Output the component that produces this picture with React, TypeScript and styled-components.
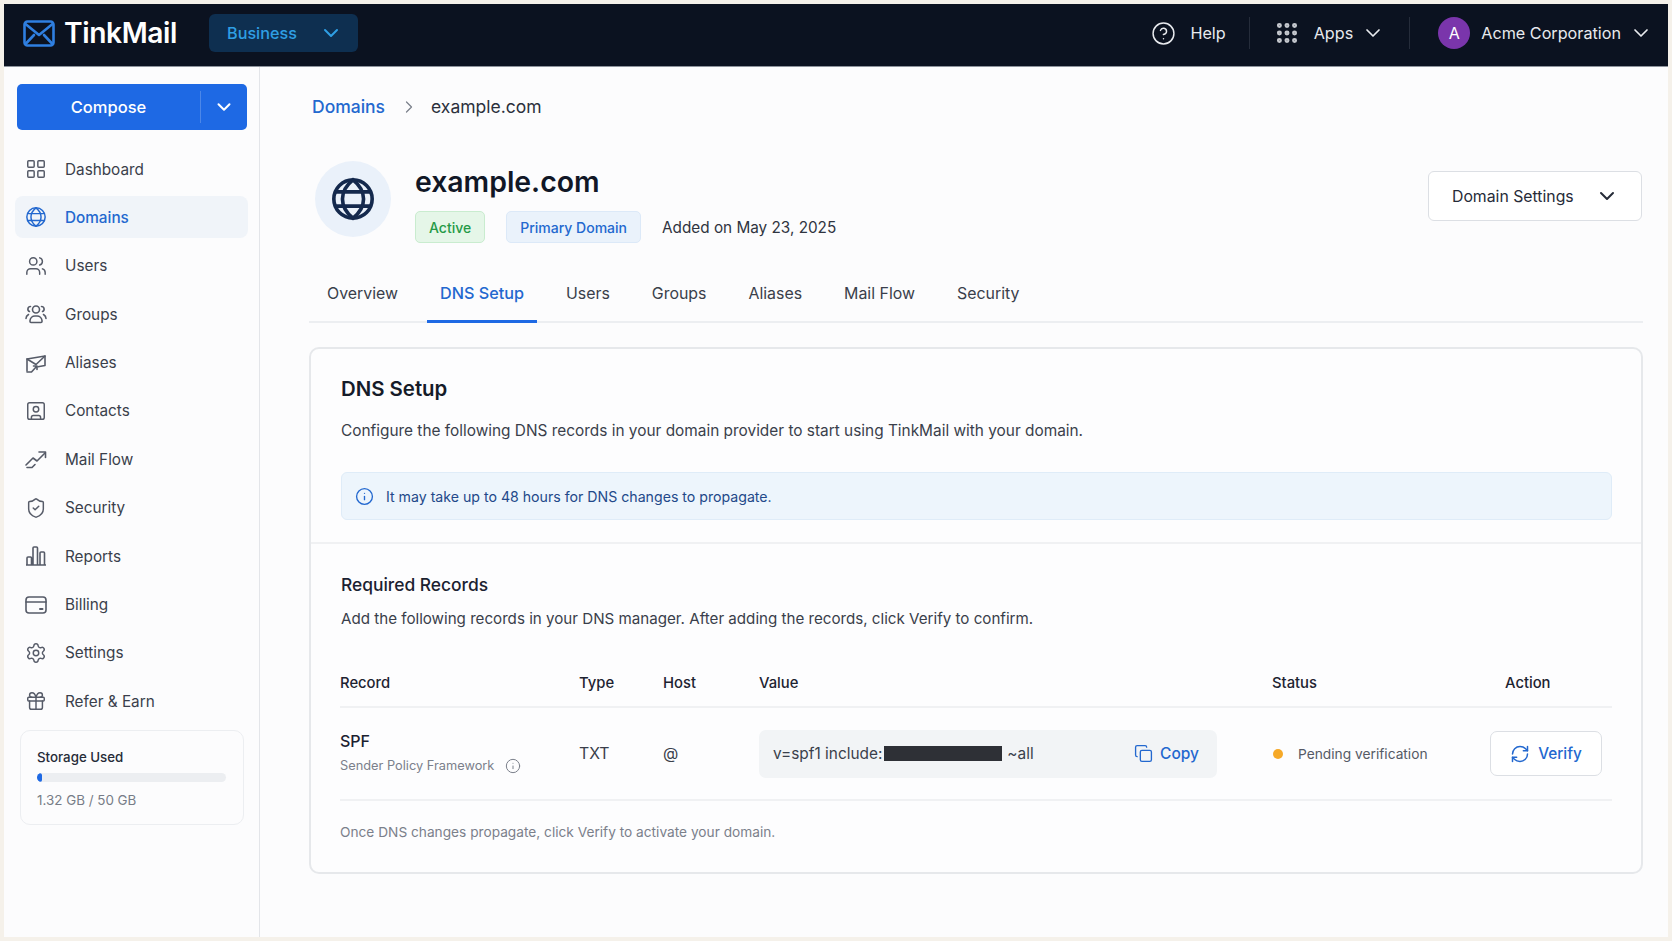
import React from "react";
import styled, { createGlobalStyle } from "styled-components";
import {
  ChevronDown,
  ChevronRight,
  CircleHelp,
  Copy,
  Gift,
  Grip,
  Info,
  LayoutGrid,
  RefreshCw,
  Settings,
  ShieldCheck,
  SquareUser,
  Users,
} from "lucide-react";

const GlobalStyle = createGlobalStyle`
  html, body { margin: 0; padding: 0; height: 100%; }
  body {
    background: #f5f1ea;
    font-family: Inter, "Noto Sans", "Liberation Sans", sans-serif;
    color: #1b2130;
    overflow: hidden;
  }
  * { box-sizing: border-box; }
`;

const Frame = styled.div`
  width: 1672px;
  height: 941px;
  padding: 4px;
  display: flex;
  flex-direction: column;
`;

const Header = styled.header`
  height: 63px;
  flex: none;
  display: flex;
  align-items: center;
  background: #0b1220;
  border-bottom: 1px solid #8d939c;
  padding: 0 15px 4px 19px;
`;

const Logo = styled.div`
  display: flex;
  align-items: center;
  gap: 9px;
  color: #fff;
  font-size: 28.2px;
  font-weight: 600;
  letter-spacing: -0.4px;
`;

const PlanButton = styled.div`
  margin-left: 32px;
  width: 149px;
  height: 38px;
  border-radius: 6px;
  background: #0e2f50;
  color: #2f9fe4;
  font-size: 16.2px;
  font-weight: 500;
  display: flex;
  align-items: center;
  justify-content: space-between;
  padding: 0 15px 0 18px;
`;

const HeaderRight = styled.div`
  margin-left: auto;
  display: flex;
  align-items: center;
  color: #e8eaee;
  font-size: 16.2px;
`;

const HeaderItem = styled.div`
  display: flex;
  align-items: center;
  gap: 14px;
`;

const HeaderCaret = styled(ChevronDown)`
  margin-left: -6px;
`;

const HeaderDivider = styled.div`
  width: 1px;
  height: 32px;
  margin: 0 23.5px;
  background: #252c3a;
`;

const Avatar = styled.div`
  width: 32px;
  height: 32px;
  margin: 0 -3px 0 5px;
  border-radius: 50%;
  background: #7a35ab;
  color: #fff;
  display: flex;
  align-items: center;
  justify-content: center;
  font-size: 16px;
`;

const Body = styled.div`
  flex: 1;
  display: flex;
  min-height: 0;
  background: #fcfcfd;
`;

const Sidebar = styled.aside`
  width: 256px;
  flex: none;
  border-right: 1px solid #e3e5e9;
  padding: 17px 11px 0 11px;
`;

const ComposeButton = styled.div`
  margin: 0 1px 0 2px;
  height: 46px;
  border-radius: 5px;
  background: #1e69e4;
  color: #fff;
  font-size: 16.5px;
  font-weight: 500;
  display: flex;
  align-items: center;
`;

const ComposeLabel = styled.div`
  flex: 1;
  text-align: center;
`;

const ComposeCaret = styled.div`
  width: 47px;
  height: 32px;
  border-left: 1px solid #4c87e8;
  display: flex;
  align-items: center;
  justify-content: center;
`;

const Nav = styled.nav`
  margin-top: 18px;
  display: flex;
  flex-direction: column;
`;

const NavItem = styled.div<{ $active?: boolean }>`
  height: 42px;
  margin-bottom: 6.4px;
  border-radius: 8px;
  display: flex;
  align-items: center;
  gap: 18px;
  padding-left: 10px;
  font-size: 15.3px;
  color: ${(p) => (p.$active ? "#2368cf" : "#3a3f4b")};
  background: ${(p) => (p.$active ? "#f0f4f9" : "transparent")};
  font-weight: ${(p) => (p.$active ? 500 : 400)};
  svg { flex: none; color: ${(p) => (p.$active ? "#2368cf" : "#565b68")}; }
`;

const StorageCard = styled.div`
  margin: 1px 4px 0 5px;
  height: 95px;
  border: 1px solid #eceef1;
  border-radius: 10px;
  padding: 17px 17px 0 16px;
`;

const StorageTitle = styled.div`
  font-size: 13.3px;
  font-weight: 500;
  color: #262b38;
  line-height: 18px;
`;

const StorageTrack = styled.div`
  height: 9px;
  margin-top: 7px;
  border-radius: 5px;
  background: #eceef1;
  overflow: hidden;
`;

const StorageFill = styled.div`
  height: 100%;
  background: #1e69e4;
  border-radius: 5px;
`;

const StorageText = styled.div`
  margin-top: 10px;
  font-size: 13.4px;
  color: #777c87;
`;

const Main = styled.main`
  flex: 1;
  min-width: 0;
  padding: 0 25px 0 49px;
`;

const Crumbs = styled.div`
  height: 88px;
  padding-bottom: 9px;
  display: flex;
  align-items: center;
  font-size: 17.5px;
  margin-left: 3px;
`;

const CrumbLink = styled.span`
  color: #2368cf;
  font-weight: 500;
`;

const CrumbCaret = styled(ChevronRight)`
  margin-left: 14px;
  color: #7b808b;
`;

const CrumbCurrent = styled.span`
  margin-left: 12px;
  color: #2b303c;
`;

const DomainHead = styled.div`
  display: flex;
  align-items: center;
  height: 76px;
  margin-top: 6px;
  margin-left: 6px;
`;

const GlobeBadge = styled.div`
  width: 76px;
  height: 76px;
  border-radius: 50%;
  background: #eaf1fa;
  display: flex;
  align-items: center;
  justify-content: center;
  color: #14294d;
  flex: none;
`;

const DomainInfo = styled.div`
  margin-left: 24px;
  margin-top: 9px;
  display: flex;
  flex-direction: column;
  gap: 11px;
`;

const DomainName = styled.h1`
  margin: 0;
  font-size: 28.4px;
  line-height: 36px;
  font-weight: 600;
  color: #111726;
`;

const BadgeRow = styled.div`
  display: flex;
  align-items: center;
  gap: 21px;
`;

const Badge = styled.span<{ $tone: "green" | "blue" }>`
  height: 32px;
  padding: 0 13px;
  border-radius: 5px;
  font-size: 14px;
  font-weight: 500;
  display: flex;
  align-items: center;
  color: ${(p) => (p.$tone === "green" ? "#259a47" : "#2368cf")};
  background: ${(p) => (p.$tone === "green" ? "#e5f6e8" : "#eaf2fb")};
  border: 1px solid ${(p) => (p.$tone === "green" ? "#c9eccf" : "#dce9f8")};
`;

const AddedOn = styled.span`
  font-size: 15.3px;
  color: #2f3440;
`;

const SettingsButton = styled.div`
  margin-left: auto;
  margin-right: 1px;
  margin-top: -6px;
  width: 214px;
  height: 50px;
  border: 1px solid #dcdfe4;
  border-radius: 6px;
  background: #fff;
  display: flex;
  align-items: center;
  justify-content: space-between;
  padding: 0 22px 0 23px;
  font-size: 15.8px;
  color: #262b38;
`;

const Tabs = styled.div`
  margin-top: 26px;
  height: 60px;
  padding-left: 5px;
  border-bottom: 2px solid #eceef1;
  display: flex;
`;

const Tab = styled.div<{ $active?: boolean }>`
  height: 60px;
  padding: 3px 13px 0;
  margin-right: 16px;
  display: flex;
  align-items: center;
  font-size: ${(p) => (p.$active ? "16.2px" : "15.9px")};
  color: ${(p) => (p.$active ? "#2368cf" : "#3a3f4b")};
  font-weight: ${(p) => (p.$active ? 500 : 400)};
  border-bottom: 3px solid ${(p) => (p.$active ? "#1e69e4" : "transparent")};
`;

const Card = styled.section`
  margin-top: 24px;
  height: 527px;
  border: 2px solid #e6e8eb;
  border-radius: 10px;
  background: #fdfdfe;
`;

const CardTop = styled.div`
  height: 195px;
  padding: 26px 29px 0 30px;
  border-bottom: 2px solid #f0f1f3;
`;

const CardTitle = styled.h2`
  margin: 0;
  font-size: 20.4px;
  line-height: 28px;
  font-weight: 600;
  color: #151b29;
`;

const CardText = styled.p`
  margin: 16px 0 0;
  font-size: 15.4px;
  line-height: 24px;
  color: #3a3f4b;
`;

const Notice = styled.div`
  margin-top: 29px;
  height: 48px;
  border: 1px solid #dfecf8;
  border-radius: 6px;
  background: #edf5fc;
  display: flex;
  align-items: center;
  gap: 12px;
  padding: 0 13px;
  color: #23498a;
  font-size: 14.15px;
  svg { color: #2368cf; flex: none; }
`;

const CardBottom = styled.div`
  padding: 28px 29px 0 29px;
`;

const SubTitle = styled.h3`
  margin: 0 0 0 1px;
  font-size: 17.4px;
  line-height: 26px;
  font-weight: 500;
  color: #1b2130;
`;

const SubText = styled.p`
  margin: 9px 0 0 1px;
  font-size: 15.15px;
  line-height: 24px;
  color: #3a3f4b;
`;

const RecordGrid = styled.div`
  display: grid;
  grid-template-columns: 239px 84px 96px 513px 233px 1fr;
  align-items: center;
`;

const HeadRow = styled(RecordGrid)`
  margin-top: 33px;
  height: 44px;
  border-bottom: 2px solid #f0f1f3;
  font-size: 14.8px;
  font-weight: 500;
  color: #1d2331;
  padding-bottom: 4px;
`;

const RecordRow = styled(RecordGrid)`
  height: 93px;
  border-bottom: 2px solid #f0f1f3;
  font-size: 15.8px;
  color: #3a3f4b;
`;

const RecordName = styled.div`
  font-size: 16px;
  line-height: 22px;
  font-weight: 500;
  color: #1b2130;
`;

const RecordHint = styled.div`
  margin: 4px 0 2px;
  display: flex;
  align-items: center;
  gap: 11px;
  font-size: 12.8px;
  line-height: 20px;
  color: #7b808b;
`;

const ValueBox = styled.div`
  width: 458px;
  height: 48px;
  border-radius: 7px;
  background: #f2f4f6;
  display: flex;
  align-items: center;
  padding: 0 18px 0 14px;
  font-size: 15.4px;
  color: #3a3f4b;
`;

const Masked = styled.span`
  width: 118px;
  height: 15px;
  margin: 0 5px 0 2px;
  background: #2e3036;
`;

const CopyLink = styled.span`
  margin-left: auto;
  display: flex;
  align-items: center;
  gap: 7px;
  color: #2368cf;
  font-size: 15.5px;
  font-weight: 500;
`;

const StatusCell = styled.div`
  display: flex;
  align-items: center;
  gap: 15px;
  font-size: 13.75px;
  color: #555a65;
`;

const StatusDot = styled.span`
  width: 10px;
  height: 10px;
  margin-left: 1px;
  border-radius: 50%;
  background: #f6a928;
  flex: none;
`;

const VerifyButton = styled.div`
  margin-left: -15px;
  width: 112px;
  height: 45px;
  border: 1px solid #dcdfe4;
  border-radius: 7px;
  background: #fff;
  display: flex;
  align-items: center;
  justify-content: center;
  gap: 8px;
  color: #2368cf;
  font-size: 15.3px;
  font-weight: 500;
`;

const Footnote = styled.p`
  margin: 21px 0 0;
  font-size: 13.7px;
  line-height: 20px;
  color: #7b808b;
`;

const MailLogo = () => (
  <svg width="32" height="27" viewBox="0 0 32 27" fill="none" stroke="#2f7fe0" strokeWidth="2.6" strokeLinejoin="round" strokeLinecap="round">
    <rect x="1.5" y="1.5" width="29" height="24" rx="3" />
    <path d="M2.500 4l13.500 11L29.500 4M2.500 24l8.500-9M29.500 24l-8.500-9" />
  </svg>
);

// latitude lines sit at a third and two thirds of the height, like the picture
const GlobeIcon = ({ size, weight }: { size: number; weight: number }) => (
  <svg width={size} height={size} viewBox="0 0 24 24" fill="none" stroke="currentColor" strokeWidth={weight} strokeLinecap="round">
    <circle cx="12" cy="12" r="10" />
    <path d="M12 2c-3.800 3-5.500 6.400-5.500 10s1.700 7 5.500 10c3.800-3 5.500-6.400 5.500-10S15.800 5 12 2z" />
    <path d="M3 8.300h18M3 15.700h18" />
  </svg>
);

const GroupIcon = () => (
  <svg width="22" height="22" viewBox="0 0 22 22" fill="none" stroke="currentColor" strokeWidth="1.6" strokeLinecap="round" strokeLinejoin="round">
    <circle cx="11" cy="6.500" r="3.500" />
    <path d="M5 18.500v-1a5 5 0 0 1 5-4.500h2a5 5 0 0 1 5 4.500v1a1 1 0 0 1-1 1H6a1 1 0 0 1-1-1z" />
    <path d="M5.500 3.500a2.600 2.600 0 0 0-1 5M16.500 3.500a2.600 2.600 0 0 1 1 5M3.500 11.500C2 12.300 1 13.700 1 15.500M18.500 11.500c1.500.8 2.500 2.200 2.500 4" />
  </svg>
);

const AliasIcon = () => (
  <svg width="22" height="22" viewBox="0 0 22 22" fill="none" stroke="currentColor" strokeWidth="1.6" strokeLinejoin="round" strokeLinecap="round">
    <path d="M2 19V7l18-3v9.500l-7 1.200" />
    <path d="M2 7l9 5.500L20 4" />
    <path d="M2 20h4.500l5-5.500M8.500 14h3.500v3.500" />
  </svg>
);

const FlowIcon = () => (
  <svg width="22" height="22" viewBox="0 0 22 22" fill="none" stroke="currentColor" strokeWidth="1.6" strokeLinejoin="round" strokeLinecap="round">
    <path d="M1 17l7-7 4 3 8-8" />
    <path d="M14 4h6.500v5.500" />
    <path d="M2 19.500h5l3-3" />
  </svg>
);

const BarsIcon = () => (
  <svg width="22" height="22" viewBox="0 0 22 22" fill="none" stroke="currentColor" strokeWidth="1.6" strokeLinejoin="round">
    <path d="M2 20v-7a1 1 0 0 1 1-1h2.500a1 1 0 0 1 1 1v7zM8 20V3a1 1 0 0 1 1-1h2.500a1 1 0 0 1 1 1v17zM15 20V8a1 1 0 0 1 1-1h2.500a1 1 0 0 1 1 1v12zM1 20h20" />
  </svg>
);

const CardIcon = () => (
  <svg width="22" height="22" viewBox="0 0 22 22" fill="none" stroke="currentColor" strokeWidth="1.6" strokeLinecap="round" strokeLinejoin="round">
    <rect x="1" y="3" width="20" height="16" rx="3" />
    <path d="M1 8h20" />
    <path d="M15 15h2.500" strokeWidth="2" />
  </svg>
);

const navItems: { label: string; icon: React.ReactNode; active?: boolean }[] = [
  { label: "Dashboard", icon: <LayoutGrid size={22} strokeWidth={1.6} /> },
  { label: "Domains", icon: <GlobeIcon size={22} weight={1.6} />, active: true },
  { label: "Users", icon: <Users size={22} strokeWidth={1.6} /> },
  { label: "Groups", icon: <GroupIcon /> },
  { label: "Aliases", icon: <AliasIcon /> },
  { label: "Contacts", icon: <SquareUser size={22} strokeWidth={1.6} /> },
  { label: "Mail Flow", icon: <FlowIcon /> },
  { label: "Security", icon: <ShieldCheck size={22} strokeWidth={1.6} /> },
  { label: "Reports", icon: <BarsIcon /> },
  { label: "Billing", icon: <CardIcon /> },
  { label: "Settings", icon: <Settings size={22} strokeWidth={1.6} /> },
  { label: "Refer & Earn", icon: <Gift size={22} strokeWidth={1.6} /> },
];

const tabs = ["Overview", "DNS Setup", "Users", "Groups", "Aliases", "Mail Flow", "Security"];

export default function App() {
  return (
    <>
      <GlobalStyle />
      <Frame>
        <Header>
          <Logo>
            <MailLogo />
            TinkMail
          </Logo>
          <PlanButton>
            Business
            <ChevronDown size={24} strokeWidth={2} />
          </PlanButton>
          <HeaderRight>
            <HeaderItem>
              <CircleHelp size={25} strokeWidth={1.4} />
              Help
            </HeaderItem>
            <HeaderDivider />
            <HeaderItem>
              <Grip size={26} strokeWidth={2.6} color="#c4c7cd" />
              <span>Apps</span>
              <HeaderCaret size={24} strokeWidth={1.7} />
            </HeaderItem>
            <HeaderDivider />
            <HeaderItem>
              <Avatar>A</Avatar>
              <span>Acme Corporation</span>
              <HeaderCaret size={24} strokeWidth={1.7} />
            </HeaderItem>
          </HeaderRight>
        </Header>
        <Body>
          <Sidebar>
            <ComposeButton>
              <ComposeLabel>Compose</ComposeLabel>
              <ComposeCaret>
                <ChevronDown size={22} strokeWidth={2.2} />
              </ComposeCaret>
            </ComposeButton>
            <Nav>
              {navItems.map((item) => (
                <NavItem key={item.label} $active={item.active}>
                  {item.icon}
                  {item.label}
                </NavItem>
              ))}
            </Nav>
            <StorageCard>
              <StorageTitle>Storage Used</StorageTitle>
              <StorageTrack>
                <StorageFill style={{ width: `${(1.32 / 50) * 100}%` }} />
              </StorageTrack>
              <StorageText>1.32 GB / 50 GB</StorageText>
            </StorageCard>
          </Sidebar>
          <Main>
            <Crumbs>
              <CrumbLink>Domains</CrumbLink>
              <CrumbCaret size={20} strokeWidth={1.5} />
              <CrumbCurrent>example.com</CrumbCurrent>
            </Crumbs>
            <DomainHead>
              <GlobeBadge>
                <GlobeIcon size={46} weight={1.9} />
              </GlobeBadge>
              <DomainInfo>
                <DomainName>example.com</DomainName>
                <BadgeRow>
                  <Badge $tone="green">Active</Badge>
                  <Badge $tone="blue">Primary Domain</Badge>
                  <AddedOn>Added on May 23, 2025</AddedOn>
                </BadgeRow>
              </DomainInfo>
              <SettingsButton>
                Domain Settings
                <ChevronDown size={24} strokeWidth={2} />
              </SettingsButton>
            </DomainHead>
            <Tabs>
              {tabs.map((tab) => (
                <Tab key={tab} $active={tab === "DNS Setup"}>
                  {tab}
                </Tab>
              ))}
            </Tabs>
            <Card>
              <CardTop>
                <CardTitle>DNS Setup</CardTitle>
                <CardText>
                  Configure the following DNS records in your domain provider to start using TinkMail with your domain.
                </CardText>
                <Notice>
                  <Info size={19} strokeWidth={1.7} />
                  It may take up to 48 hours for DNS changes to propagate.
                </Notice>
              </CardTop>
              <CardBottom>
                <SubTitle>Required Records</SubTitle>
                <SubText>Add the following records in your DNS manager. After adding the records, click Verify to confirm.</SubText>
                <HeadRow>
                  <span>Record</span>
                  <span>Type</span>
                  <span>Host</span>
                  <span>Value</span>
                  <span>Status</span>
                  <span>Action</span>
                </HeadRow>
                <RecordRow>
                  <div>
                    <RecordName>SPF</RecordName>
                    <RecordHint>
                      Sender Policy Framework
                      <Info size={16} strokeWidth={1.5} />
                    </RecordHint>
                  </div>
                  <span>TXT</span>
                  <span>@</span>
                  <ValueBox>
                    v=spf1 include:
                    <Masked />
                    ~all
                    <CopyLink>
                      <Copy size={19} strokeWidth={1.7} />
                      Copy
                    </CopyLink>
                  </ValueBox>
                  <StatusCell>
                    <StatusDot />
                    Pending verification
                  </StatusCell>
                  <VerifyButton>
                    <RefreshCw size={20} strokeWidth={1.8} />
                    Verify
                  </VerifyButton>
                </RecordRow>
                <Footnote>Once DNS changes propagate, click Verify to activate your domain.</Footnote>
              </CardBottom>
            </Card>
          </Main>
        </Body>
      </Frame>
    </>
  );
}
